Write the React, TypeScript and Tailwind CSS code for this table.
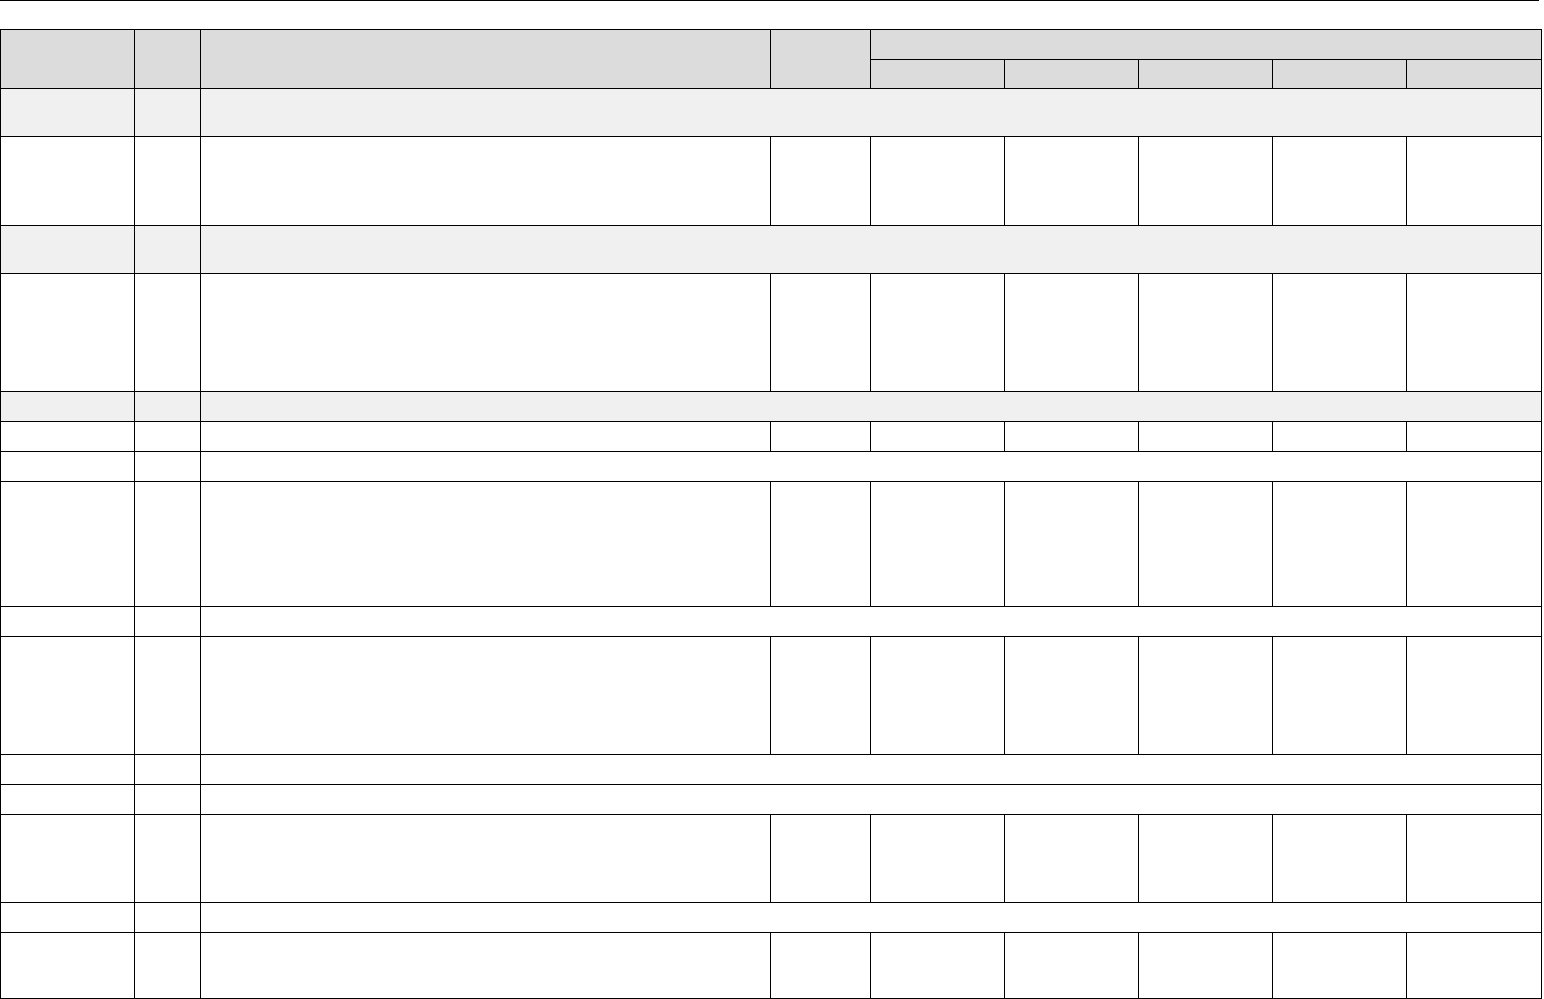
import React from 'react';

type Row =
  | { kind: 'cells'; h: string }
  | { kind: 'section'; h: string; gray?: boolean };

// Row heights in px, measured off the sheet
const rows: Row[] = [
  { kind: 'section', h: 'h-[48px]', gray: true },
  { kind: 'cells', h: 'h-[89px]' },
  { kind: 'section', h: 'h-[48px]', gray: true },
  { kind: 'cells', h: 'h-[118px]' },
  { kind: 'section', h: 'h-[30px]', gray: true },
  { kind: 'cells', h: 'h-[30px]' },
  { kind: 'section', h: 'h-[30px]' },
  { kind: 'cells', h: 'h-[125px]' },
  { kind: 'section', h: 'h-[30px]' },
  { kind: 'cells', h: 'h-[118px]' },
  { kind: 'section', h: 'h-[30px]' },
  { kind: 'section', h: 'h-[30px]' },
  { kind: 'cells', h: 'h-[88px]' },
  { kind: 'section', h: 'h-[30px]' },
  { kind: 'cells', h: 'h-[66px]' },
];

const cell = 'border border-black p-0';

export default function App() {
  return (
    <div className="bg-white min-h-screen w-[1544px] h-[999px] overflow-hidden font-['Liberation_Sans',sans-serif]">
      {/* Page rule */}
      <div className="h-px w-[1539px] bg-black" />

      <table className="mt-[28px] table-fixed border-collapse w-[1541px]">
        <colgroup>
          <col className="w-[134px]" />
          <col className="w-[66px]" />
          <col className="w-[570px]" />
          <col className="w-[100px]" />
          <col className="w-[134px]" />
          <col className="w-[134px]" />
          <col className="w-[134px]" />
          <col className="w-[134px]" />
          <col className="w-[135px]" />
        </colgroup>
        <thead>
          <tr className="h-[30px] bg-[#dcdcdc]">
            <th rowSpan={2} className={cell} />
            <th rowSpan={2} className={cell} />
            <th rowSpan={2} className={cell} />
            <th rowSpan={2} className={cell} />
            <th colSpan={5} className={cell} />
          </tr>
          <tr className="h-[29px] bg-[#dcdcdc]">
            <th className={cell} />
            <th className={cell} />
            <th className={cell} />
            <th className={cell} />
            <th className={cell} />
          </tr>
        </thead>
        <tbody>
          {rows.map((row, i) =>
            row.kind === 'section' ? (
              <tr key={i} className={`${row.h} ${row.gray ? 'bg-[#f0f0f0]' : 'bg-white'}`}>
                <td className={cell} />
                <td className={cell} />
                <td colSpan={7} className={cell} />
              </tr>
            ) : (
              <tr key={i} className={row.h}>
                {Array.from({ length: 9 }).map((_, j) => (
                  <td key={j} className={cell} />
                ))}
              </tr>
            )
          )}
        </tbody>
      </table>
    </div>
  );
}
